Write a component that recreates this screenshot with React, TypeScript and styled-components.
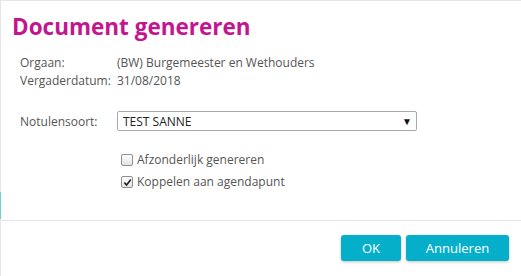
import styled, { createGlobalStyle } from "styled-components";

const GlobalStyle = createGlobalStyle`
  html, body {
    margin: 0;
    padding: 0;
    background: #ffffff;
  }
  body {
    font-family: "Open Sans", "Liberation Sans", sans-serif;
  }
`;

const Dialog = styled.div`
  position: relative;
  box-sizing: border-box;
  width: 521px;
  height: 276px;
  background: #ffffff;
  border-top: 1px solid #e6e6e6;
  border-left: 1px solid #e6e6e6;
  display: flex;
  flex-direction: column;
`;

const SideMark = styled.div`
  position: absolute;
  left: -1px;
  top: 191px;
  width: 1px;
  height: 27px;
  background: #6fd0dc;
`;

const Body = styled.div`
  flex: 1;
  padding: 11px 0 0 11px;
  display: flex;
  flex-direction: column;
`;

const Title = styled.h1`
  margin: 0;
  font-size: 22.5px;
  font-weight: 700;
  line-height: 29px;
  color: #c3168e;
`;

const InfoList = styled.div`
  margin-top: 13px;
  padding-left: 8px;
  display: grid;
  grid-template-columns: 97px 1fr;
  font-size: 12px;
  line-height: 18px;
  color: #555555;
`;

const FormRow = styled.div`
  margin-top: 21px;
  padding-left: 8px;
  display: flex;
  align-items: center;
  font-size: 12px;
  color: #555555;
`;

const Label = styled.span`
  width: 97px;
`;

const Select = styled.div`
  box-sizing: border-box;
  width: 300px;
  height: 20px;
  border: 1px solid #a9a9a9;
  border-radius: 2px;
  padding: 0 4px 0 5px;
  display: flex;
  align-items: center;
  justify-content: space-between;
  font-size: 12px;
  color: #222222;
`;

const Arrow = styled.span`
  font-size: 10px;
  color: #111111;
`;

const Checks = styled.div`
  margin-top: 20px;
  padding-left: 109px;
  display: flex;
  flex-direction: column;
  gap: 4px;
`;

const CheckRow = styled.label`
  display: flex;
  align-items: center;
  gap: 4px;
  font-size: 12px;
  line-height: 18px;
  color: #555555;
`;

const Box = styled.span`
  box-sizing: border-box;
  width: 12px;
  height: 12px;
  border: 1px solid #8f8f8f;
  border-radius: 2px;
  background: linear-gradient(#fdfdfd, #e4e4e4);
  display: flex;
  align-items: center;
  justify-content: center;
`;

const Footer = styled.div`
  height: 56px;
  border-top: 1px solid #e5e5e5;
  display: flex;
  justify-content: flex-end;
  align-items: flex-start;
  padding: 14px 12px 0 0;
  box-sizing: border-box;
  gap: 5px;
`;

const Button = styled.button<{ $wide?: boolean }>`
  height: 26px;
  width: ${({ $wide }) => ($wide ? "103px" : "60px")};
  border: none;
  border-radius: 3px;
  background: #05afc9;
  color: #ffffff;
  font-family: "Open Sans", "Liberation Sans", sans-serif;
  font-size: 13px;
  box-shadow: 0 1px 3px rgba(0, 0, 0, 0.25);
  cursor: pointer;
`;

const Check = () => (
  <svg width="9" height="9" viewBox="0 0 10 10">
    <path d="M1.5 5.2 L4 7.8 L8.7 1.8" fill="none" stroke="#222" strokeWidth="1.8" />
  </svg>
);

export default function App() {
  return (
    <>
      <GlobalStyle />
      <Dialog>
        <SideMark />
        <Body>
          <Title>Document genereren</Title>
          <InfoList>
            <span>Orgaan:</span>
            <span>(BW) Burgemeester en Wethouders</span>
            <span>Vergaderdatum:</span>
            <span>31/08/2018</span>
          </InfoList>
          <FormRow>
            <Label>Notulensoort:</Label>
            <Select>
              <span>TEST SANNE</span>
              <Arrow>▼</Arrow>
            </Select>
          </FormRow>
          <Checks>
            <CheckRow>
              <Box />
              Afzonderlijk genereren
            </CheckRow>
            <CheckRow>
              <Box>
                <Check />
              </Box>
              Koppelen aan agendapunt
            </CheckRow>
          </Checks>
        </Body>
        <Footer>
          <Button>OK</Button>
          <Button $wide>Annuleren</Button>
        </Footer>
      </Dialog>
    </>
  );
}
